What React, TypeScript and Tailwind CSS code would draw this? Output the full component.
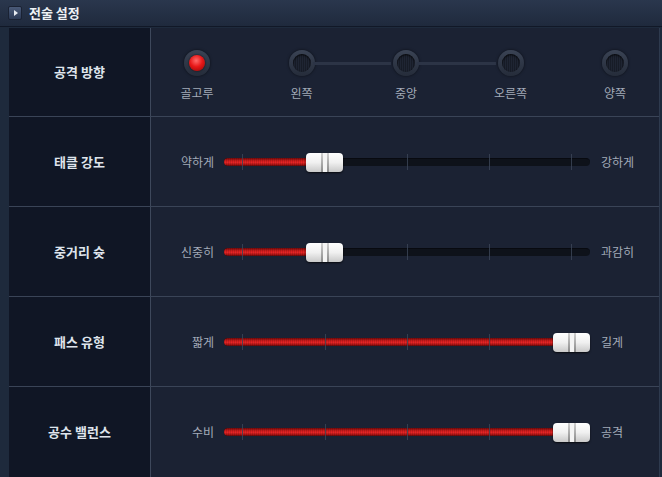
import React from "react";

const font = { fontFamily: '"Noto Sans CJK KR", "Noto Sans", sans-serif' };

function Radio({ active }: { active: boolean }) {
  return (
    <div className="w-[26px] h-[26px] rounded-full bg-gradient-to-b from-[#3a4354] to-[#252c3a] flex items-center justify-center shadow-[0_0_3px_rgba(0,0,0,0.6)]">
      {active ? (
        <div className="w-[16px] h-[16px] rounded-full bg-[radial-gradient(circle_at_45%_35%,#ff6a6a_0%,#e81818_45%,#8e0606_100%)] shadow-[0_0_2px_rgba(0,0,0,0.8)]" />
      ) : (
        <div className="w-[18px] h-[18px] rounded-full bg-[repeating-linear-gradient(90deg,#171c27_0px,#171c27_1px,#1f2533_1px,#1f2533_2px)] shadow-[inset_0_1px_2px_rgba(0,0,0,0.8)]" />
      )}
    </div>
  );
}

function DirectionRow() {
  const items = ["골고루", "왼쪽", "중앙", "오른쪽", "양쪽"];
  const connectors = [false, true, true, false];
  return (
    <div className="flex items-start pl-[33px] pt-[22px]">
      {items.map((label, i) => (
        <React.Fragment key={label}>
          <div className="flex flex-col items-center w-[26px]">
            <Radio active={i === 0} />
            <div className="mt-[9px] whitespace-nowrap text-[12px] leading-[16px] text-[#a3abb8]">{label}</div>
          </div>
          {i < items.length - 1 && (
            <div className="w-[78.5px] h-[26px] flex items-center">
              {connectors[i] && <div className="w-full h-[3px] bg-[#2c3446] mx-[-2px]" />}
            </div>
          )}
        </React.Fragment>
      ))}
    </div>
  );
}

function Slider({ left, right, pos }: { left: string; right: string; pos: number }) {
  const ticks = [18, 101, 183, 265, 347];
  return (
    <div className="flex items-center h-full">
      <div className="w-[63px] text-right text-[12px] text-[#a3abb8] whitespace-nowrap">{left}</div>
      <div className="relative ml-[10px] w-[366px] h-[20px] flex items-center">
        <div className="w-full h-[8px] rounded-[4px] bg-[#0e121a] border-t border-[#080a10]" />
        <div
          className="absolute left-0 top-[6px] h-[8px] rounded-l-[4px] bg-[repeating-linear-gradient(90deg,rgba(0,0,0,0.12)_0px,rgba(0,0,0,0.12)_1px,transparent_1px,transparent_2px),linear-gradient(180deg,#6e0a0a_0%,#d21c1c_35%,#e82626_55%,#a51212_85%,#5a0707_100%)]"
          style={{ width: pos + 2 }}
        />
        {ticks.map((t) => (
          <div key={t} className="absolute top-[2px] w-px h-[16px] bg-[#3d4759] opacity-80" style={{ left: t }} />
        ))}
        <div
          className="absolute top-[1px] w-[37px] h-[19px] rounded-[4px] bg-gradient-to-b from-[#ffffff] via-[#f0f0f0] to-[#c9c9c9] shadow-[0_1px_2px_rgba(0,0,0,0.7)] flex justify-center"
          style={{ left: pos }}
        >
          <div className="w-[2px] h-full bg-gradient-to-b from-[#d0d0d0] to-[#8a8a8a]" />
          <div className="w-[4px] h-full bg-[#f4f4f4]" />
          <div className="w-[2px] h-full bg-gradient-to-b from-[#d0d0d0] to-[#8a8a8a]" />
        </div>
      </div>
      <div className="ml-[11px] text-[12px] text-[#a3abb8] whitespace-nowrap">{right}</div>
    </div>
  );
}

function Row({ title, children, h, last }: { title: string; children: React.ReactNode; h: string; last?: boolean }) {
  return (
    <div className={`flex ${h} ${last ? "" : "border-b border-[#3a4457]"}`}>
      <div className="w-[142px] shrink-0 bg-[#101625] flex items-center justify-center text-[13px] font-bold text-[#dfe4ec] border-r border-[#3e485b]">
        {title}
      </div>
      <div className="flex-1 bg-[#1b2233]">{children}</div>
    </div>
  );
}

export default function App() {
  return (
    <div className="w-[662px] h-[477px] bg-[#1e2a3c] overflow-hidden" style={font}>
      <div className="h-[27px] flex items-center bg-gradient-to-b from-[#2a374d] to-[#1f2a3d] border-b border-[#111827]">
        <div className="ml-[8px] w-[14px] h-[14px] rounded-[2px] bg-gradient-to-b from-[#4a5a78] to-[#2c3a55] border border-[#1a2233] flex items-center justify-center">
          <div className="w-0 h-0 border-y-[3px] border-y-transparent border-l-[4px] border-l-[#e8ecf2] ml-[1px]" />
        </div>
        <div className="ml-[7px] text-[13px] font-bold text-[#eef1f5]">전술 설정</div>
      </div>
      <div className="pl-[9px] pr-[2px] pt-px">
        <div className="border-r border-[#2e3a4e]">
          <Row title="공격 방향" h="h-[89px]">
            <DirectionRow />
          </Row>
          <Row title="태클 강도" h="h-[90px]">
            <Slider left="약하게" right="강하게" pos={82} />
          </Row>
          <Row title="중거리 슛" h="h-[90px]">
            <Slider left="신중히" right="과감히" pos={82} />
          </Row>
          <Row title="패스 유형" h="h-[90px]">
            <Slider left="짧게" right="길게" pos={329} />
          </Row>
          <Row title="공수 밸런스" h="h-[90px]" last>
            <Slider left="수비" right="공격" pos={329} />
          </Row>
        </div>
      </div>
    </div>
  );
}
